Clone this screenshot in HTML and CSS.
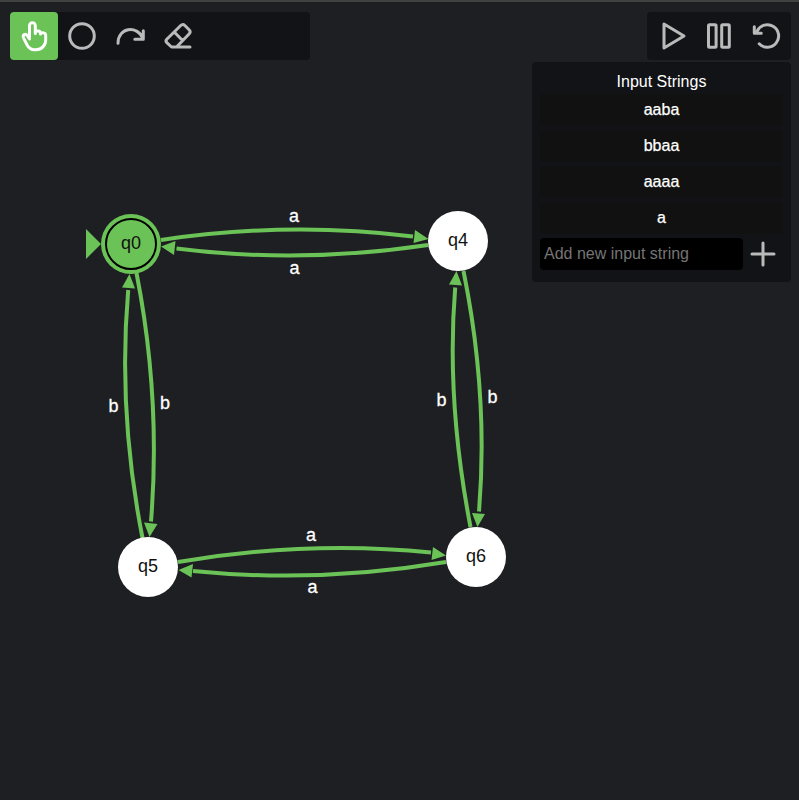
FILE: index.html
```html
<!DOCTYPE html>
<html lang="en">
<head>
<meta charset="utf-8">
<title>Automaton editor</title>
<link rel="stylesheet" href="styles.css">
</head>
<body>
<svg class="graph" viewBox="0 0 799 800" width="799" height="800">
  <g class="edges">
    <path d="M161 240Q288 221 413 236.500"/>
    <path d="M428 245Q300 264 176.500 248.500"/>
    <path d="M136.500 273Q161 398 151 521.500"/>
    <path d="M142.500 538Q117.700 412 128.200 290"/>
    <path d="M463.500 271Q488.600 395 479 511.500"/>
    <path d="M470.500 527Q446 400 455.200 287.500"/>
    <path d="M178 562Q308 540 431 552.500"/>
    <path d="M446 562Q318 583.500 193 571"/>
  </g>
  <g class="heads">
    <path d="M428.500 239L415 230L413.500 243Z"/>
    <path d="M161 246.500L175.500 241L174 255Z"/>
    <path d="M149.500 537L144 522.500L157.500 524Z"/>
    <path d="M129.500 274L122 287.500L135 288.500Z"/>
    <path d="M477.500 527L472 513L485 514Z"/>
    <path d="M456.500 271L449 284.500L462 285.500Z"/>
    <path d="M446 555.500L433 547L431.500 560Z"/>
    <path d="M178.500 570L193 564L191.500 577.500Z"/>
    <path d="M86 229L101 244L86 259Z"/>
  </g>
  <circle class="start" cx="131" cy="244" r="30"/>
  <circle class="ring" cx="131" cy="244" r="25"/>
  <circle class="state" cx="458" cy="241" r="30"/>
  <circle class="state" cx="148" cy="567" r="30"/>
  <circle class="state" cx="476" cy="557" r="30"/>
  <g class="names">
    <text x="131" y="249">q0</text>
    <text x="458" y="246">q4</text>
    <text x="148" y="572">q5</text>
    <text x="476" y="562">q6</text>
  </g>
  <g class="labels">
    <text x="294" y="222">a</text>
    <text x="294.500" y="274">a</text>
    <text x="165" y="409">b</text>
    <text x="113.500" y="412">b</text>
    <text x="492.500" y="403">b</text>
    <text x="441.500" y="406">b</text>
    <text x="311" y="541">a</text>
    <text x="312.500" y="593">a</text>
  </g>
</svg>
<main class="overlay">
  <nav class="bar tools">
    <button class="tool active" aria-label="Select"><svg viewBox="0 0 48 48"><path d="M19.500 25.500V13.700a2.900 2.900 0 0 1 5.800 0V21.500M25.300 20.500C25.600 18.300 30.300 18.300 30.500 21V22M30.500 21.800C31.500 20 35.700 20.600 35.700 23.300V28c0 5.500-4.200 9.700-9.700 9.700h-1.400c-3.300 0-5.600-1.500-7.400-4.500l-3.700-7.400c-1.300-3.200 2-4.700 3.700-2.300l2.300 3.500"/></svg></button>
    <button class="tool" aria-label="State"><svg viewBox="0 0 48 48"><circle cx="24" cy="24" r="12.300"/></svg></button>
    <button class="tool" aria-label="Transition"><svg viewBox="0 0 48 48"><path d="M12 31.300C12 15.500 31 12.500 37 26.500M37.300 18.800V27.300H28.800"/></svg></button>
    <button class="tool" aria-label="Erase"><svg viewBox="0 0 48 48"><path d="M36 35H17.500L12.800 30.700Q11.200 29 12.800 27.300L26.700 13.500Q28.800 11.500 30.900 13.500L35.300 18Q37 19.900 35.300 21.700L22.500 35M20.700 20.500L28.300 28.200"/></svg></button>
  </nav>
  <section class="right">
    <div class="bar">
      <button class="tool" aria-label="Play"><svg viewBox="0 0 48 48"><path d="M17 12V36L37 24Z"/></svg></button>
      <button class="tool" aria-label="Pause"><svg viewBox="0 0 48 48"><rect x="13.500" y="12.700" width="7.600" height="22.600" rx="1"/><rect x="26.700" y="12.700" width="7.600" height="22.600" rx="1"/></svg></button>
      <button class="tool" aria-label="Reset"><svg viewBox="0 0 48 48"><path d="M16.200 31.800A11.300 11.300 0 1 0 14.200 19L12.500 20.800M11.300 14.800V21.300H18.300"/></svg></button>
    </div>
    <div class="panel">
      <h2>Input Strings</h2>
      <ul>
        <li>aaba</li>
        <li>bbaa</li>
        <li>aaaa</li>
        <li>a</li>
      </ul>
      <div class="add">
        <input type="text" placeholder="Add new input string">
        <button aria-label="Add"><svg viewBox="0 0 40 32"><path d="M9 16H31M20 5V27"/></svg></button>
      </div>
    </div>
  </section>
</main>
</body>
</html>
```
FILE: styles.css
```css
* { box-sizing: border-box; }
body {
  margin: 0;
  height: 800px;
  overflow: hidden;
  position: relative;
  background: #1e1f23;
  border-top: 2px solid #404242;
  color: #fff;
  font: 16px/24px "Liberation Sans", Arial, sans-serif;
}
.graph { position: absolute; left: 0; top: -2px; }
.edges { fill: none; stroke: #6bc256; stroke-width: 4; }
.heads, .start { fill: #6bc256; }
.ring { fill: none; stroke: #000; stroke-width: 2; }
.state { fill: #fff; }
.names, .labels { font-size: 18px; text-anchor: middle; }
.names { fill: #111; }
.labels { fill: #fff; stroke: #fff; stroke-width: 0.3; }
.overlay {
  position: relative;
  display: flex;
  justify-content: space-between;
  align-items: flex-start;
  padding: 10px 8px 0 10px;
}
.bar { display: flex; height: 48px; border-radius: 4px; background: #121317; }
.tools { width: 300px; }
button { border: 0; padding: 0; background: none; color: #b9bbba; }
.tool { width: 48px; height: 48px; border-radius: 4px; }
.tool.active { background: #6bc256; color: #fff; }
button svg {
  display: block;
  width: 100%;
  height: 100%;
  fill: none;
  stroke: currentColor;
  stroke-width: 3;
  stroke-linecap: round;
  stroke-linejoin: round;
}
.right { display: flex; flex-direction: column; align-items: flex-end; gap: 2px; }
.panel {
  width: 259px;
  height: 220px;
  padding: 8px;
  border-radius: 4px;
  background: #121317;
}
h2 { margin: 0; font: inherit; text-align: center; }
li { -webkit-text-stroke: 0.25px #fff; }
ul {
  display: grid;
  gap: 4px;
  margin: 0;
  padding: 0;
  list-style: none;
  text-align: center;
}
li { height: 32px; line-height: 31px; border-radius: 4px; background: #111; }
.add { display: flex; margin-top: 4px; }
input {
  width: 203px;
  height: 32px;
  padding: 0 4px;
  border: 0;
  border-radius: 4px;
  background: #000;
  color: #fff;
  font: inherit;
}
input::placeholder { color: #757575; }
.add button { width: 40px; height: 32px; }
```
